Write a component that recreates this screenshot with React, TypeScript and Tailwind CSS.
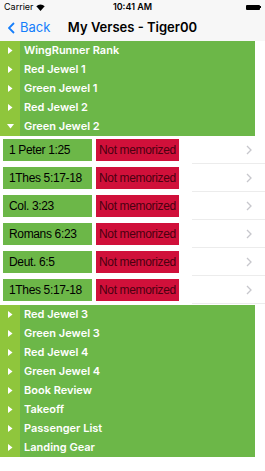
import React from "react";

const before = ["WingRunner Rank", "Red Jewel 1", "Green Jewel 1", "Red Jewel 2"];
const after = ["Red Jewel 3", "Green Jewel 3", "Red Jewel 4", "Green Jewel 4", "Book Review", "Takeoff", "Passenger List", "Landing Gear"];
const verses = ["1 Peter 1:25", "1Thes 5:17-18", "Col. 3:23", "Romans 6:23", "Deut. 6:5", "1Thes 5:17-18"];

function Section({ label, open }: { label: string; open?: boolean }) {
  return (
    <div className="flex h-[19px] w-[255px]">
      <div className="flex w-[20px] items-center justify-center bg-[#8fc63c]">
        {open ? (
          <svg width="7" height="5" viewBox="0 0 7 5"><path d="M0 0 L7 0 L3.5 4.5 Z" fill="#fff" /></svg>
        ) : (
          <svg width="5" height="7" viewBox="0 0 5 7"><path d="M0 0 L4.5 3.5 L0 7 Z" fill="#fff" /></svg>
        )}
      </div>
      <div className="flex flex-1 items-center bg-[#6cb748] pl-[4px] text-[11px] font-semibold text-white">{label}</div>
    </div>
  );
}

export default function App() {
  return (
    <div className="relative h-[471px] w-[265px] overflow-hidden bg-white" style={{ fontFamily: "Inter, 'Liberation Sans', sans-serif" }}>
      <div className="bg-[#f7f7f7]">
        <div className="relative flex h-[14px] items-center px-[4px] text-[9px] text-black">
          <span className="flex items-center gap-[2px]">
            Carrier
            <svg width="9" height="7" viewBox="0 0 9 7"><path d="M4.5 7 L0.3 2.3 A6 6 0 0 1 8.7 2.3 Z" fill="#000" /></svg>
          </span>
          <span className="absolute left-0 right-0 text-center font-semibold">10:41 AM</span>
          <span className="ml-auto flex items-center">
            <span className="h-[5px] w-[14px] rounded-[1px] bg-black" />
            <span className="h-[2px] w-[1px] bg-black" />
          </span>
        </div>
        <div className="relative flex h-[27px] items-center">
          <div className="flex items-center pl-[8px] text-[#157efb]">
            <svg width="7" height="12" viewBox="0 0 7 12"><path d="M6 1 L1 6 L6 11" stroke="#157efb" strokeWidth="1.8" fill="none" /></svg>
            <span className="ml-[5px] text-[13px]">Back</span>
          </div>
          <div className="absolute left-0 right-0 text-center text-[13px] font-semibold text-black">My Verses - Tiger00</div>
        </div>
      </div>
      <div className="flex flex-col">
        {before.map((b) => (
          <Section key={b} label={b} />
        ))}
        <Section label="Green Jewel 2" open />
        {verses.map((v, i) => (
          <div key={i} className="relative flex h-[28px] items-center whitespace-nowrap text-[12px] tracking-[-0.35px]" style={{ fontFamily: "'Liberation Sans', Arial, sans-serif" }}>
            <div className="ml-[3px] flex h-[22px] w-[89px] items-center overflow-hidden bg-[#6cb748] pl-[6px] text-black">{v}</div>
            <div className="ml-[4px] flex h-[22px] w-[83px] items-center overflow-hidden bg-[#d0103a] pl-[3px] text-[#4a0010]">Not memorized</div>
            <svg className="absolute left-[246px] top-[9px]" width="6" height="10" viewBox="0 0 6 10"><path d="M1 1 L5 5 L1 9" stroke="#c7c7cc" strokeWidth="1.3" fill="none" /></svg>
            <div className="absolute bottom-0 left-[192px] right-0 h-px bg-[#ececec]" />
          </div>
        ))}
        <div className="h-[1px]" />
        {after.map((b) => (
          <Section key={b} label={b} />
        ))}
      </div>
    </div>
  );
}
